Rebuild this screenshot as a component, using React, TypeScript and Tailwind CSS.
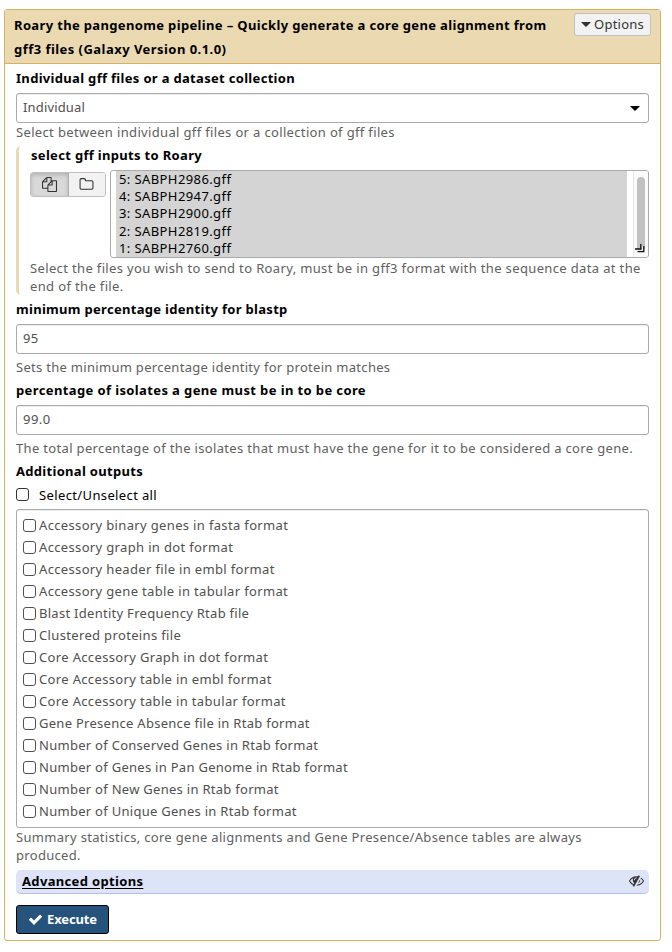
import type { ReactNode } from 'react';

function Glyph({ d, className }: { d: string; className: string }) {
  return (
    <svg viewBox="0 0 1792 1792" fill="currentColor" className={className} aria-hidden="true">
      <path d={d} />
    </svg>
  );
}

const FILES =
  'M1696 384q40 0 68 28t28 68v1216q0 40-28 68t-68 28h-960q-40 0-68-28t-28-68v-288h-544q-40 0-68-28t-28-68v-672q0-40 20-88t48-76l408-408q28-28 76-48t88-20h416q40 0 68 28t28 68v328q68-40 128-40h416zm-544 213l-299 299h299v-299zm-640-384l-299 299h299v-299zm196 647l316-316v-416h-384v416q0 40-28 68t-68 28h-416v640h512v-256q0-40 20-88t48-76zm956 804v-1152h-384v416q0 40-28 68t-68 28h-416v640h896z';
const FOLDER =
  'M1600 1312v-704q0-40-28-68t-68-28h-704q-40 0-68-28t-28-68v-64q0-40-28-68t-68-28h-320q-40 0-68 28t-28 68v960q0 40 28 68t68 28h1216q40 0 68-28t28-68zm128-704v704q0 92-66 158t-158 66h-1216q-92 0-158-66t-66-158v-960q0-92 66-158t158-66h320q92 0 158 66t66 158v32h672q92 0 158 66t66 158z';
const CHECK =
  'M1671 566q0 40-28 68l-724 724-136 136q-28 28-68 28t-68-28l-136-136-362-362q-28-28-28-68t28-68l136-136q28-28 68-28t68 28l294 295 656-657q28-28 68-28t68 28l136 136q28 28 28 68z';
const EYE_SLASH =
  'M555 1335l78-141q-87-63-136-159t-49-203q0-121 61-225-229 117-381 353 167 258 427 375zm389-759q0-20-14-34t-34-14q-125 0-214.5 89.5t-89.5 214.5q0 20 14 34t34 14 34-14 14-34q0-86 61-147t147-61q20 0 34-14t14-34zm363-191q0 7-1 9-106 189-316 567t-315 566l-49 89q-10 16-28 16-12 0-134-70-16-10-16-28 0-12 44-87-143-65-263.5-173t-208.5-245q-20-31-20-69t20-69q153-235 380-371t496-136q89 0 180 17l54-97q10-16 28-16 5 0 18 6t31 15.5 33 18.5 31.5 18.5 19.500 11.500q16 10 16 27zm37 447q0 139-79 253.500t-209 164.500l280-502q8 45 8 84zm448 128q0 35-20 69-39 64-109 145-150 172-347.500 267t-419.500 95l74-132q212-18 392.500-137t301.500-307q-115-179-282-294l63-112q95 64 182.500 153t144.500 184q20 34 20 69z';

const OUTPUTS = [
  'Accessory binary genes in fasta format',
  'Accessory graph in dot format',
  'Accessory header file in embl format',
  'Accessory gene table in tabular format',
  'Blast Identity Frequency Rtab file',
  'Clustered proteins file',
  'Core Accessory Graph in dot format',
  'Core Accessory table in embl format',
  'Core Accessory table in tabular format',
  'Gene Presence Absence file in Rtab format',
  'Number of Conserved Genes in Rtab format',
  'Number of Genes in Pan Genome in Rtab format',
  'Number of New Genes in Rtab format',
  'Number of Unique Genes in Rtab format',
];

const FILE_OPTIONS = [
  '5: SABPH2986.gff',
  '4: SABPH2947.gff',
  '3: SABPH2900.gff',
  '2: SABPH2819.gff',
  '1: SABPH2760.gff',
];

function Label({ children, className }: { children: ReactNode; className: string }) {
  return <div className={`whitespace-nowrap font-bold leading-[18px] text-black ${className}`}>{children}</div>;
}

function Help({ children, className }: { children: ReactNode; className: string }) {
  return <p className={`whitespace-nowrap leading-[18px] text-[#606060] ${className}`}>{children}</p>;
}

function Field({ children, className }: { children: ReactNode; className: string }) {
  return (
    <div
      className={`flex h-[30px] items-center justify-between rounded-[3px] border border-[#aaa] bg-white pl-1.5 pr-2 text-[#505050] shadow-[inset_0_1px_1px_rgba(0,0,0,0.075)] ${className}`}
    >
      {children}
    </div>
  );
}

function Box({ className }: { className: string }) {
  return <span className={`h-[13px] w-[13px] shrink-0 rounded-[3px] border-[1.5px] bg-white ${className}`} />;
}

function Caret({ className }: { className: string }) {
  return (
    <svg viewBox="0 0 10 5" fill="currentColor" className={className} aria-hidden="true">
      <path d="M.6 0h8.800q.6 0 .2.500L5.600 4.600q-.6.5-1.200 0L.4.500Q0 0 .6 0z" />
    </svg>
  );
}

export default function App() {
  return (
    <div className="h-[952px] w-[672px] overflow-hidden bg-white pl-1 pt-[9px] font-['Noto_Sans','Open_Sans',sans-serif] text-[13px]">
      <section className="h-[932px] w-[657px] rounded-[3px] border border-[#d6b161] bg-white">
        <header className="flex h-[54px] justify-between border-b border-[#d6b161] bg-[#ebd9b2] pl-[9px] pr-[9px]">
          <h1 className="whitespace-nowrap pt-[3px] font-bold leading-6 text-black">
            <span className="block tracking-[0.35px]">
              Roary the pangenome pipeline – Quickly generate a core gene alignment from
            </span>
            <span className="block tracking-[0.46px]">gff3 files (Galaxy Version 0.1.0)</span>
          </h1>
          <button className="mt-[3px] flex h-[23px] w-[77px] items-center rounded-[3px] border border-[#bfbfbf] bg-[#f2f2f2] pl-1.5 tracking-[0.24px] text-[#333]">
            <Caret className="mr-[3px] h-[5px] w-[10px]" />
            Options
          </button>
        </header>

        <div className="pl-[11px] pr-[11px] pt-[5px]">
          <Label className="tracking-[0.316px]">Individual gff files or a dataset collection</Label>
          <Field className="mt-1.5 tracking-[0.16px]">
            Individual
            <Caret className="h-[5px] w-[10px] text-black" />
          </Field>
          <Help className="tracking-[0.345px]">
            Select between individual gff files or a collection of gff files
          </Help>

          <div className="mt-[5px] h-[149px] rounded-[5px] border-l-[3px] border-[#ebd9b2] pl-[11px]">
            <Label className="pl-px tracking-[0.32px]">select gff inputs to Roary</Label>
            <div className="mt-1.5 flex h-[88px]">
              <div className="mt-0.5 flex h-[25px] w-[76px] overflow-hidden rounded-[3px] border border-[#bfbfbf] text-[#333]">
                <span className="flex w-[38px] items-center justify-center border-r border-[#adadad] bg-[#d9d9d9] shadow-[inset_0_2px_4px_rgba(0,0,0,0.18)]">
                  <Glyph d={FILES} className="h-[15px] w-[15px]" />
                </span>
                <span className="flex flex-1 items-center justify-center bg-[#f2f2f2]">
                  <Glyph d={FOLDER} className="mr-px h-[15px] w-[15px]" />
                </span>
              </div>
              <div className="ml-1 flex flex-1 overflow-hidden rounded-[3px] border border-[#aaa] bg-white pl-[5px]">
                <ul className="flex-1 bg-[#d4d4d4] pl-[3px] tracking-[0.4px] text-black">
                  {FILE_OPTIONS.map((name) => (
                    <li key={name} className="h-[17.200px] whitespace-nowrap leading-[17px]">
                      {name}
                    </li>
                  ))}
                </ul>
                <div className="relative ml-1.5 flex w-[15px] justify-center border-l border-[#e8e8e8] bg-[#fafafa] pt-1.5">
                  <div className="h-[74px] w-2 rounded-full bg-[#c1c1c1]" />
                  <svg viewBox="0 0 10 10" className="absolute bottom-1 right-[3px] h-[10px] w-[10px]" fill="none">
                    <path d="M7.500 3v4.500H2.500" stroke="#eee" strokeWidth="1" />
                    <path d="M5.800 1v5H0" stroke="#111" strokeWidth="1.300" />
                    <path d="M8.800 3v5.700H2.500" stroke="#111" strokeWidth="1.300" />
                  </svg>
                </div>
              </div>
            </div>
            <Help className="mt-px tracking-[0.355px]">
              Select the files you wish to send to Roary, must be in gff3 format with the sequence data at the
              <br />
              end of the file.
            </Help>
          </div>

          <Label className="mt-[5px] tracking-[0.3px]">minimum percentage identity for blastp</Label>
          <Field className="mt-1.5 tracking-[0.3px]">95</Field>
          <Help className="mt-1 tracking-[0.295px]">Sets the minimum percentage identity for protein matches</Help>

          <Label className="mt-[5px] tracking-[0.384px]">percentage of isolates a gene must be in to be core</Label>
          <Field className="mt-1.5 tracking-[0.45px]">99.0</Field>
          <Help className="mt-1 tracking-[0.336px]">
            The total percentage of the isolates that must have the gene for it to be considered a core gene.
          </Help>

          <Label className="mt-[5px] tracking-[0.306px]">Additional outputs</Label>
          <label className="mt-[7px] flex h-[18px] items-center tracking-[0.37px] text-black">
            <Box className="-mt-1 mr-2.5 border-[#333]" />
            Select/Unselect all
          </label>
          <ul className="mt-1 h-[319px] rounded-[3px] border border-[#aaa] pl-1.5 pt-[5px] text-[#505050] shadow-[inset_0_1px_1px_rgba(0,0,0,0.075)]">
            {OUTPUTS.map((name, i) => (
              <li
                key={name}
                className={`flex h-[22px] items-center whitespace-nowrap ${i < 9 && i !== 4 ? 'tracking-[0.345px]' : 'tracking-[0.28px]'}`}
              >
                <Box className="-mt-0.5 mr-[3px] border-[#505050]" />
                {name}
              </li>
            ))}
          </ul>
          <Help className="tracking-[0.31px]">
            Summary statistics, core gene alignments and Gene Presence/Absence tables are always
            <br />
            produced.
          </Help>

          <div className="mt-1.5 flex h-6 items-center justify-between rounded-[5px] border-b border-[#b1c1ec] bg-[#dee4f8] pl-1.5 pr-[5px] text-black">
            <span className="font-bold tracking-[0.34px] underline underline-offset-2">Advanced options</span>
            <Glyph d={EYE_SLASH} className="-mt-0.5 h-[15px] w-[15px] text-[#333]" />
          </div>

          <button className="mt-[11px] flex h-[29px] w-[93px] items-center rounded-[3px] border border-black bg-[#25537b] pl-[11px] font-bold tracking-[-0.13px] text-white">
            <Glyph d={CHECK} className="mr-1 h-[15px] w-[15px]" />
            Execute
          </button>
        </div>
      </section>
    </div>
  );
}
